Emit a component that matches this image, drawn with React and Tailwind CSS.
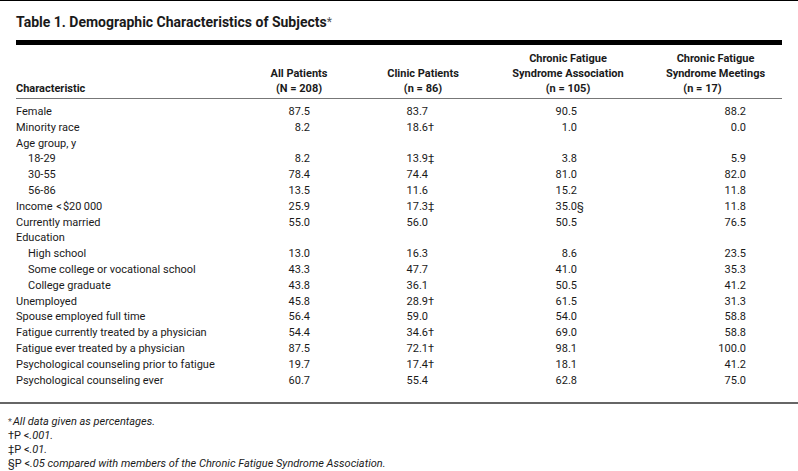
const rows = [
  { label: "Female", v: [["87.5"], ["83.7"], ["90.5"], ["88.2"]] },
  { label: "Minority race", v: [["8.2"], ["18.6", "†"], ["1.0"], ["0.0"]] },
  { label: "Age group, y", v: null },
  { label: "18-29", sub: true, v: [["8.2"], ["13.9", "‡"], ["3.8"], ["5.9"]] },
  { label: "30-55", sub: true, v: [["78.4"], ["74.4"], ["81.0"], ["82.0"]] },
  { label: "56-86", sub: true, v: [["13.5"], ["11.6"], ["15.2"], ["11.8"]] },
  { label: "Income <$20 000", v: [["25.9"], ["17.3", "‡"], ["35.0", "§"], ["11.8"]] },
  { label: "Currently married", v: [["55.0"], ["56.0"], ["50.5"], ["76.5"]] },
  { label: "Education", v: null },
  { label: "High school", sub: true, v: [["13.0"], ["16.3"], ["8.6"], ["23.5"]] },
  { label: "Some college or vocational school", sub: true, v: [["43.3"], ["47.7"], ["41.0"], ["35.3"]] },
  { label: "College graduate", sub: true, v: [["43.8"], ["36.1"], ["50.5"], ["41.2"]] },
  { label: "Unemployed", v: [["45.8"], ["28.9", "†"], ["61.5"], ["31.3"]] },
  { label: "Spouse employed full time", v: [["56.4"], ["59.0"], ["54.0"], ["58.8"]] },
  { label: "Fatigue currently treated by a physician", v: [["54.4"], ["34.6", "†"], ["69.0"], ["58.8"]] },
  { label: "Fatigue ever treated by a physician", v: [["87.5"], ["72.1", "†"], ["98.1"], ["100.0"]] },
  { label: "Psychological counseling prior to fatigue", v: [["19.7"], ["17.4", "†"], ["18.1"], ["41.2"]] },
  { label: "Psychological counseling ever", v: [["60.7"], ["55.4"], ["62.8"], ["75.0"]] },
];

// widths of the value cells; the number sits right-aligned in the first 40px
const cellW = ["w-[118px]", "w-[149px]", "w-[169px]", "w-[76px]"];

function Row({ row }) {
  return (
    <div className="flex h-[15.8px] items-center leading-[15.8px]">
      <div className={row.sub ? "w-[254px] pl-3" : "w-[254px]"}>
        {row.label === "Income <$20 000" ? (
          <span>
            Income <span className="mx-[1px]">&lt;</span>$20&#8201;000
          </span>
        ) : (
          row.label
        )}
      </div>
      {row.v &&
        row.v.map(([num, mark], i) => (
          <div key={i} className={`${cellW[i]} flex`}>
            <span className="w-10 text-right">{num}</span>
            {mark && <span>{mark}</span>}
          </div>
        ))}
    </div>
  );
}

export default function App() {
  return (
    <div className="w-[798px] h-[471px] overflow-hidden bg-white border-t border-black text-[#1a1a1a] font-['Liberation_Sans_Narrow','Roboto','Liberation_Sans',sans-serif]">
      <div className="px-4 pt-[12px]">
        <h1 className="text-[14px] leading-[18px] font-bold">
          Table 1. Demographic Characteristics of Subjects
          <span className="font-normal text-[#555] text-[12px] align-top">*</span>
        </h1>

        <div className="mt-[9px] h-[5px] bg-black" />

        {/* header */}
        <div className="flex items-end pt-[6px] pb-[2px] text-[11px] leading-[15px] font-bold border-b border-[#777]">
          <div className="w-[223px]">Characteristic</div>
          <div className="w-[120px] text-center">
            <div>All Patients</div>
            <div>(N = 208)</div>
          </div>
          <div className="w-[128px] text-center">
            <div>Clinic Patients</div>
            <div>(n = 86)</div>
          </div>
          <div className="w-[162px] text-center">
            <div>Chronic Fatigue</div>
            <div>Syndrome Association</div>
            <div>(n = 105)</div>
          </div>
          <div className="flex-1 text-center">
            <div>Chronic Fatigue</div>
            <div>Syndrome Meetings</div>
            <div className="pr-[26px]">(n = 17)</div>
          </div>
        </div>

        {/* body */}
        <div className="pt-[5px] text-[11px]">
          {rows.map((r) => (
            <Row key={r.label} row={r} />
          ))}
        </div>
      </div>

      <div className="mt-[14px] h-[2px] bg-[#666]" />

      <div className="px-2 pt-[11px] text-[11px] leading-[14px] italic">
        <div>
          <span className="not-italic text-[#555] text-[9px] align-top mr-[1px]">*</span>All data given as percentages.
        </div>
        <div>
          <span className="not-italic">†P &lt;</span>.001.
        </div>
        <div>
          <span className="not-italic">‡P &lt;</span>.01.
        </div>
        <div>
          <span className="not-italic">§P &lt;</span>.05 compared with members of the Chronic Fatigue Syndrome Association.
        </div>
      </div>
    </div>
  );
}
